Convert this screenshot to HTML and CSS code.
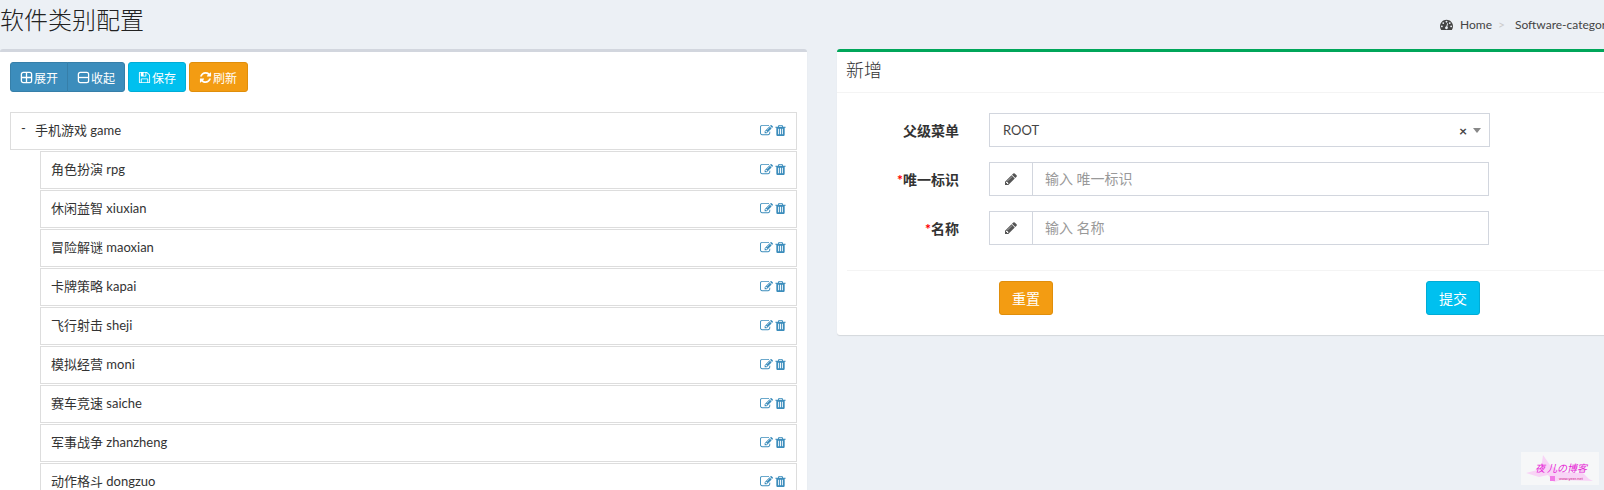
FILE: index.html
```html
<!DOCTYPE html>
<html>
 <head>
 <meta charset="UTF-8">
 <title>软件类别配置</title>
 <link rel="stylesheet" href="styles.css">
 </head>
 <body>
  <svg class="sprite" xmlns="http://www.w3.org/2000/svg">
   <symbol id="i-plus" viewBox="0 0 14 14"><rect x="1.5" y="1.5" width="11" height="11" rx="2" fill="none" stroke="currentColor" stroke-width="1.4"/><path d="M7 2v10M2 7h10" stroke="currentColor" stroke-width="1.4"/></symbol>
   <symbol id="i-minus" viewBox="0 0 14 14"><rect x="1.5" y="1.5" width="11" height="11" rx="2" fill="none" stroke="currentColor" stroke-width="1.4"/><path d="M2 7h10" stroke="currentColor" stroke-width="1.4"/></symbol>
   <symbol id="i-save" viewBox="0 0 1792 1792"><path fill="currentColor" d="M512 1536h768v-384h-768v384zm896 0h128v-896q0-14-10-38.5t-20-34.5l-281-281q-10-10-34-20t-39-10v416q0 40-28 68t-68 28h-576q-40 0-68-28t-28-68v-416h-128v1280h128v-416q0-40 28-68t68-28h832q40 0 68 28t28 68v416zm-384-928v-320q0-13-9.5-22.5t-22.5-9.5h-192q-13 0-22.5 9.5t-9.5 22.5v320q0 13 9.5 22.5t22.5 9.5h192q13 0 22.5-9.5t9.5-22.5zm640 32v928q0 40-28 68t-68 28h-1344q-40 0-68-28t-28-68v-1344q0-40 28-68t68-28h928q40 0 88 20t76 48l280 280q28 28 48 76t20 88z"/></symbol>
   <symbol id="i-refresh" viewBox="0 0 1792 1792"><path fill="currentColor" d="M1639 1056q0 5-1 7-64 268-268 434.5t-478 166.5q-146 0-282.5-55t-243.5-157l-129 129q-19 19-45 19t-45-19-19-45v-448q0-26 19-45t45-19h448q26 0 45 19t19 45-19 45l-137 137q71 66 161 102t187 36q134 0 250-65t186-179q11-17 53-117 8-23 30-23h192q13 0 22.5 9.5t9.5 22.5zm25-800v448q0 26-19 45t-45 19h-448q-26 0-45-19t-19-45 19-45l138-138q-148-137-349-137-134 0-250 65t-186 179q-11 17-53 117-8 23-30 23h-199q-13 0-22.5-9.5t-9.5-22.5v-7q65-268 270-434.5t480-166.5q146 0 284 55.5t245 156.5l130-129q19-19 45-19t45 19 19 45z"/></symbol>
   <symbol id="i-edit" viewBox="0 0 1792 1792"><path fill="currentColor" d="M888 1184l116-116-152-152-116 116v56h96v96h56zm440-720q-16-16-33 1l-350 350q-17 17-1 33t33-1l350-350q17-17 1-33zm80 594v190q0 119-84.5 203.5t-203.5 84.5h-832q-119 0-203.5-84.5t-84.5-203.5v-832q0-119 84.5-203.5t203.5-84.5h832q63 0 117 25 15 7 18 23 3 17-9 29l-49 49q-14 14-32 8-23-6-45-6h-832q-66 0-113 47t-47 113v832q0 66 47 113t113 47h832q66 0 113-47t47-113v-126q0-13 9-22l64-64q15-15 35-7t20 29zm-96-738l288 288-672 672h-288v-288zm444 132l-92 92-288-288 92-92q28-28 68-28t68 28l152 152q28 28 28 68t-28 68z"/></symbol>
   <symbol id="i-trash" viewBox="0 0 1792 1792"><path fill="currentColor" d="M704 1376v-704q0-14-9-23t-23-9h-64q-14 0-23 9t-9 23v704q0 14 9 23t23 9h64q14 0 23-9t9-23zm256 0v-704q0-14-9-23t-23-9h-64q-14 0-23 9t-9 23v704q0 14 9 23t23 9h64q14 0 23-9t9-23zm256 0v-704q0-14-9-23t-23-9h-64q-14 0-23 9t-9 23v704q0 14 9 23t23 9h64q14 0 23-9t9-23zm-544-992h448l-48-117q-7-9-17-11h-317q-10 2-17 11zm928 32v64q0 14-9 23t-23 9h-96v948q0 83-47 143.5t-113 60.5h-832q-66 0-113-58.5t-47-141.5v-952h-96q-14 0-23-9t-9-23v-64q0-14 9-23t23-9h309l70-167q15-37 54-63t79-26h320q40 0 79 26t54 63l70 167h309q14 0 23 9t9 23z"/></symbol>
   <symbol id="i-pencil" viewBox="0 0 1792 1792"><path fill="currentColor" d="M491 1536l91-91-235-235-91 91v107h128v128h107zm523-928q0-22-22-22-10 0-17 7l-542 542q-7 7-7 17 0 22 22 22 10 0 17-7l542-542q7-7 7-17zm-54-192l416 416-832 832h-416v-416zm683 96q0 53-37 90l-166 166-416-416 166-165q36-38 90-38 53 0 91 38l235 234q37 39 37 91z"/></symbol>
   <symbol id="i-dash" viewBox="0 0 1792 1792"><path fill="currentColor" d="M384 1152q0-53-37.5-90.5t-90.5-37.5-90.5 37.5-37.5 90.5 37.5 90.5 90.5 37.5 90.5-37.5 37.5-90.5zm192-448q0-53-37.5-90.5t-90.5-37.5-90.5 37.5-37.5 90.5 37.5 90.5 90.5 37.5 90.5-37.5 37.5-90.5zm428 481l101-382q6-26-7.5-48.5t-38.5-29.5-48 6.5-30 39.5l-101 382q-60 5-107 43.5t-63 98.5q-20 77 20 146t117 89 146-20 89-117q16-60-6-117t-72-91zm660-33q0-53-37.5-90.5t-90.5-37.5-90.5 37.5-37.5 90.5 37.5 90.5 90.5 37.5 90.5-37.5 37.5-90.5zm-640-640q0-53-37.5-90.5t-90.5-37.5-90.5 37.5-37.5 90.5 37.5 90.5 90.5 37.5 90.5-37.5 37.5-90.5zm448 192q0-53-37.5-90.5t-90.5-37.5-90.5 37.5-37.5 90.5 37.5 90.5 90.5 37.5 90.5-37.5 37.5-90.5zm320 448q0 261-141 483-19 29-54 29h-1402q-35 0-54-29-141-221-141-483 0-182 71-348t191-286 286-191 348-71 348 71 286 191 191 286 71 348z"/></symbol>
  </svg>

  <div class="page">
   <div class="content_header">
    <h1>软件类别配置</h1>
    <div class="crumb">
     <svg class="ico dash"><use href="#i-dash"/></svg>
     <span class="crumb_home">Home</span>
     <span class="crumb_sep">&gt;</span>
     <span>Software-categories</span>
    </div>
   </div>

   <div class="columns">
    <div class="box box_default">
     <div class="toolbar">
      <div class="btn_group">
       <button class="btn btn_primary"><svg class="ico"><use href="#i-plus"/></svg>展开</button>
       <button class="btn btn_primary"><svg class="ico"><use href="#i-minus"/></svg>收起</button>
      </div>
      <button class="btn btn_info"><svg class="ico"><use href="#i-save"/></svg>保存</button>
      <button class="btn btn_warning btn_refresh"><svg class="ico"><use href="#i-refresh"/></svg>刷新</button>
     </div>

     <div class="tree">
      <div class="row root"><span class="dash_mark">-</span><span class="name">手机游戏 game</span><span class="acts"><svg class="ico"><use href="#i-edit"/></svg><svg class="ico"><use href="#i-trash"/></svg></span></div>
      <div class="row"><span class="name">角色扮演 rpg</span><span class="acts"><svg class="ico"><use href="#i-edit"/></svg><svg class="ico"><use href="#i-trash"/></svg></span></div>
      <div class="row"><span class="name">休闲益智 xiuxian</span><span class="acts"><svg class="ico"><use href="#i-edit"/></svg><svg class="ico"><use href="#i-trash"/></svg></span></div>
      <div class="row"><span class="name">冒险解谜 maoxian</span><span class="acts"><svg class="ico"><use href="#i-edit"/></svg><svg class="ico"><use href="#i-trash"/></svg></span></div>
      <div class="row"><span class="name">卡牌策略 kapai</span><span class="acts"><svg class="ico"><use href="#i-edit"/></svg><svg class="ico"><use href="#i-trash"/></svg></span></div>
      <div class="row"><span class="name">飞行射击 sheji</span><span class="acts"><svg class="ico"><use href="#i-edit"/></svg><svg class="ico"><use href="#i-trash"/></svg></span></div>
      <div class="row"><span class="name">模拟经营 moni</span><span class="acts"><svg class="ico"><use href="#i-edit"/></svg><svg class="ico"><use href="#i-trash"/></svg></span></div>
      <div class="row"><span class="name">赛车竞速 saiche</span><span class="acts"><svg class="ico"><use href="#i-edit"/></svg><svg class="ico"><use href="#i-trash"/></svg></span></div>
      <div class="row"><span class="name">军事战争 zhanzheng</span><span class="acts"><svg class="ico"><use href="#i-edit"/></svg><svg class="ico"><use href="#i-trash"/></svg></span></div>
      <div class="row"><span class="name">动作格斗 dongzuo</span><span class="acts"><svg class="ico"><use href="#i-edit"/></svg><svg class="ico"><use href="#i-trash"/></svg></span></div>
     </div>
    </div>

    <div class="box box_success">
     <div class="box_header">新增</div>
     <div class="box_body">
      <div class="form_row">
       <label>父级菜单</label>
       <div class="select">
        <span class="select_value">ROOT</span>
        <span class="select_clear">×</span>
        <span class="select_arrow"></span>
       </div>
      </div>
      <div class="form_row">
       <label><b class="req">*</b>唯一标识</label>
       <div class="input_group">
        <span class="addon"><svg class="ico"><use href="#i-pencil"/></svg></span>
        <input type="text" placeholder="输入 唯一标识">
       </div>
      </div>
      <div class="form_row">
       <label><b class="req">*</b>名称</label>
       <div class="input_group">
        <span class="addon"><svg class="ico"><use href="#i-pencil"/></svg></span>
        <input type="text" placeholder="输入 名称">
       </div>
      </div>
     </div>
     <div class="box_footer">
      <button class="btn btn_warning btn_form">重置</button>
      <button class="btn btn_info btn_form btn_submit">提交</button>
     </div>
    </div>
   </div>
  </div>

  <!-- floating logo in the corner -->
  <svg class="logo" viewBox="0 0 78 33" xmlns="http://www.w3.org/2000/svg">
   <rect width="78" height="33" fill="#f6f7f8"/>
   <path d="M5 21 L20 17 L22 3 L29 13 L40 20 L62 21 L68 27 L72 29 L40 28 L33 30 L27 23 L18 25 Z" fill="#f8d4f6"/>
   <text x="14" y="20" class="logo_text">夜</text>
   <text x="26" y="20" class="logo_text">儿の博客</text>
   <rect x="29" y="24" width="5" height="5" fill="#f27ae6"/>
   <text x="38" y="28" class="logo_small">www.yeer.net</text>
  </svg>
 </body>
</html>
```

FILE: styles.css
```css
html, body { margin: 0; padding: 0; height: 490px; overflow: hidden; }
body    { background-color: #ecf0f5; color: #333;
          font-family: Lato, "Noto Sans CJK SC", sans-serif; font-size: 14px; }
.sprite { display: none; }
.page   { width: 1644px; }
.ico    { width: 14px; height: 14px; flex: none; }

/* page title row */
.content_header { display: flex; justify-content: space-between; height: 49px; }
H1      { margin: 0; padding-top: 5px; font-size: 24px; font-weight: 300; line-height: 30px; color: #222; }
.crumb  { display: flex; align-items: center; height: 48px; font-size: 12px; color: #444; width: 204px; }
.crumb .dash { width: 13px; height: 13px; margin-right: 7px; }
.crumb_sep   { color: #ccc; margin: 0 10px 0 6px; }

.columns { display: grid; grid-template-columns: 807px 807px; column-gap: 30px; align-items: start; }

/* boxes */
.box         { background: #fff; border-top: 3px solid #d2d6de; border-radius: 3px;
               box-shadow: 0 1px 1px rgba(0,0,0,.1); }
.box_default { min-height: 460px; }
.box_success { border-top-color: #00a65a; }
.box_header  { padding: 6px 9px 10px; height: 24px; line-height: 24px; font-size: 18px; font-weight: 300; color: #333;
               border-bottom: 1px solid #f4f4f4; }
.box_body    { padding: 20px 0 0; height: 157px; }
.box_footer  { display: flex; margin: 0 0 0 10px; padding: 10px 0 20px 152px; border-top: 1px solid #f4f4f4; }

/* buttons */
.btn { display: inline-flex; align-items: center; height: 30px; padding: 0 9px; margin: 0;
       font: inherit; font-size: 12px; color: #fff; border: 1px solid; border-radius: 3px; }
.btn .ico { width: 13px; height: 13px; margin-right: 1px; }
.btn_primary { background: #3c8dbc; border-color: #367fa9; }
.btn_info    { background: #00c0ef; border-color: #00acd6; }
.btn_warning { background: #f39c12; border-color: #e08e0b; }
.btn_refresh { padding-right: 10px; }
.btn_form    { justify-content: center; width: 54px; height: 34px; padding: 0; font-size: 14px; }
.btn_submit  { margin-left: 373px; }

.toolbar   { display: flex; gap: 3px; padding: 10px 10px 0; }
.btn_group { display: flex; }
.btn_group .btn:first-child { border-radius: 3px 0 0 3px; }
.btn_group .btn:last-child  { border-radius: 0 3px 3px 0; margin-left: -1px; }

/* tree */
.tree  { padding: 20px 10px 0; }
.row   { display: flex; align-items: center; box-sizing: border-box; height: 38px; margin: 0 0 1px 30px;
         padding: 0 9px 0 10px; border: 1px solid #ddd; font-size: 13px; color: #333; }
.row.root { margin-left: 0; }
.dash_mark { width: 14px; margin-bottom: 6px; }
.name  { flex: 1; padding-bottom: 3px; }
.acts  { display: flex; gap: 1px; color: #3c8dbc; padding-bottom: 1px; }
.acts .ico { width: 13px; height: 13px; }

/* form */
.form_row { display: flex; align-items: center; height: 34px; margin-bottom: 15px; }
LABEL { width: 122px; margin-right: 30px; text-align: right; font-size: 14px; font-weight: 700; color: #333; }
.req  { color: #f00; }
.select, .input_group { display: flex; align-items: center; box-sizing: border-box; height: 34px;
        background: #fff; border: 1px solid #d2d6de; }
.select { width: 501px; padding: 0 8px 0 13px; font-size: 13px; color: #444; }
.select_value { flex: 1; }
.select_clear { font-weight: 700; font-size: 14px; margin-right: 6px; }
.select_arrow { border: 4px solid transparent; border-top: 5px solid #888; border-bottom: 0; }
.input_group { width: 500px; }
.addon { display: flex; align-items: center; justify-content: center; width: 42px; height: 100%;
         border-right: 1px solid #d2d6de; color: #555; }
.addon .ico { width: 14px; height: 14px; }
INPUT { flex: 1; min-width: 0; height: 100%; box-sizing: border-box; padding: 0 12px 2px; border: 0; outline: 0;
        font: inherit; font-size: 14px; }
INPUT::placeholder { color: #999; opacity: 1; }

/* corner logo */
.logo { position: fixed; left: 1521px; top: 452px; width: 78px; height: 33px; }
.logo_text  { font-family: "Noto Sans CJK SC", sans-serif; font-size: 10px; font-style: italic; fill: #e61fd6; }
.logo_small { font-family: "Liberation Sans", sans-serif; font-size: 4px; fill: #d0208a; }
```
